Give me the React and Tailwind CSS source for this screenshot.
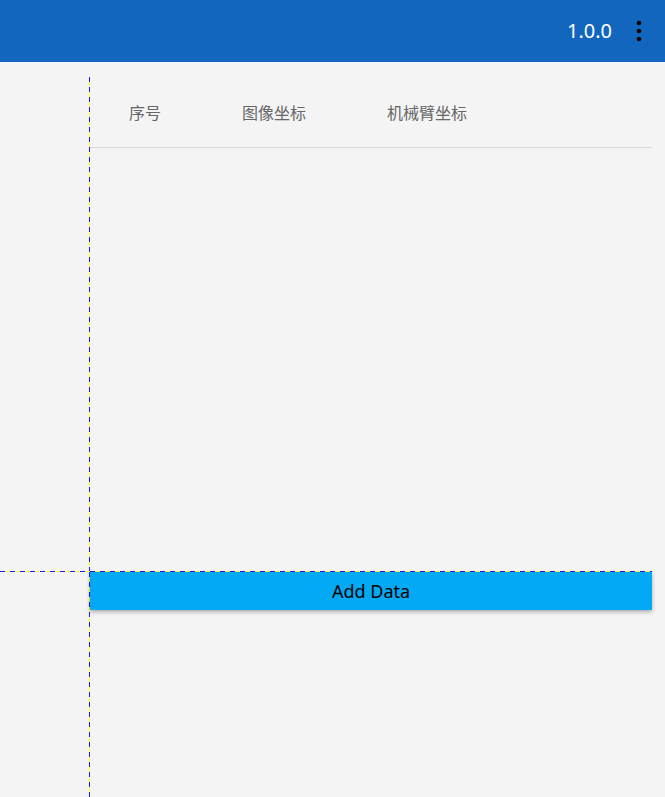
import React from 'react';

const vDash = "w-px shrink-0 bg-[repeating-linear-gradient(to_bottom,#1a1aff_0_5px,#ffff33_5px_10px)]";
const hDash = "h-px bg-[repeating-linear-gradient(to_right,#1a1aff_0_5px,#ffff33_5px_10px)]";

function KebabIcon() {
  return (
    <svg width="6" height="22" viewBox="0 0 6 22" className="block">
      <circle cx="3" cy="3" r="2.3" fill="#000" />
      <circle cx="3" cy="11" r="2.3" fill="#000" />
      <circle cx="3" cy="19" r="2.3" fill="#000" />
    </svg>
  );
}

export default function App() {
  return (
    <div className="h-[797px] w-[665px] overflow-hidden bg-[#f4f4f4] flex flex-col font-['Noto_Sans','Noto_Sans_CJK_SC',sans-serif]">
      {/* Top bar */}
      <header className="h-[62px] shrink-0 bg-[#1266bd] flex items-center justify-end pr-[23px]">
        <span className="text-white text-[20px] leading-none mr-[24px]">1.0.0</span>
        <KebabIcon />
      </header>

      {/* Table area */}
      <div className="flex pt-[15px] h-[509px] shrink-0">
        <div className="w-[89px] shrink-0" />
        <div className={vDash} />
        <div className="w-[562px] flex flex-col">
          <div className="h-[71px] border-b border-[#d9d9d9] flex items-center text-[16px] text-[#666] pt-[1px]">
            <span className="ml-[39px] w-[113px]">序号</span>
            <span className="w-[145px]">图像坐标</span>
            <span>机械臂坐标</span>
          </div>
        </div>
      </div>

      {/* Actions */}
      <div className={`${hDash} w-[652px]`} />
      <div className="flex flex-1">
        <div className="w-[89px] shrink-0" />
        <div className={vDash} />
        <div className="w-[562px]">
          <button className="w-full h-[38px] bg-[#03a9f4] text-black text-[18px] shadow-[0_2px_4px_rgba(0,0,0,0.3)] flex items-center justify-center">
            Add Data
          </button>
        </div>
      </div>
    </div>
  );
}
